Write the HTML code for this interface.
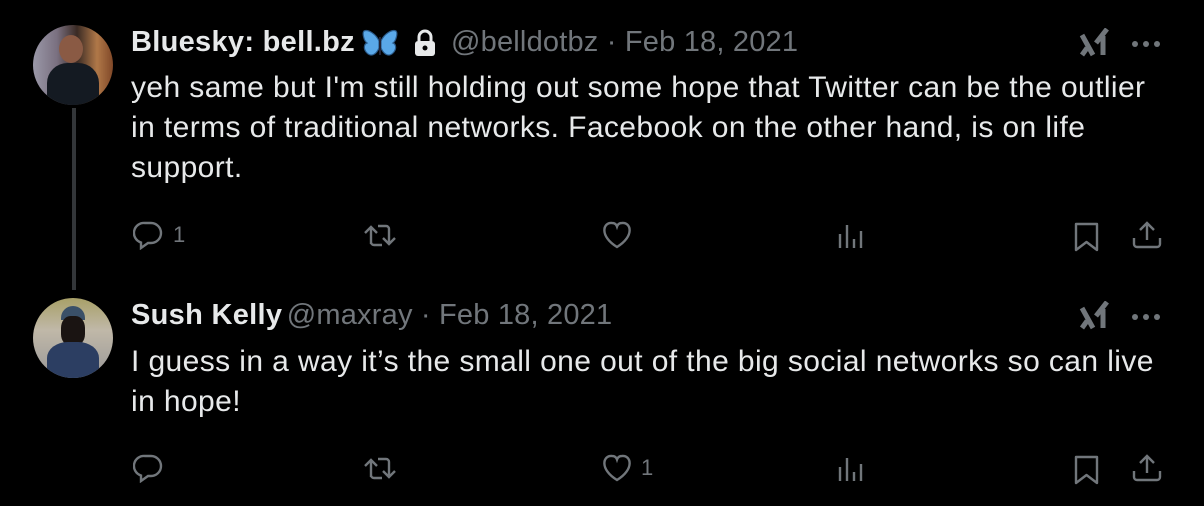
<!DOCTYPE html>
<html><head><meta charset="utf-8"><style>
body{margin:0;background:#000;width:1204px;height:506px;overflow:hidden;font-family:"Liberation Sans",Helvetica,Arial,sans-serif;color:#e7e9ea;position:relative}
.a{position:absolute}
.name{font-weight:bold;font-size:29px;letter-spacing:0.3px}
.gray{color:#71767b;font-size:29px;font-weight:normal;letter-spacing:0.2px}
.txt{font-size:30px;line-height:40px;width:1040px;letter-spacing:0.4px}
.av{border-radius:50%;width:80px;height:80px;overflow:hidden}
svg{position:absolute}
.ic{stroke:#71767b;fill:none;stroke-width:2.4}
.x{stroke:#71767b;stroke-width:5;fill:none}
</style></head><body>
<div class="a" style="left:72px;top:108px;width:4px;height:182px;background:#333639"></div>
<div class="a av" style="left:33px;top:25px;background:linear-gradient(90deg,#9a98a8 0%,#7a7080 30%,#3a2a24 55%,#b07848 80%,#804828 100%)">
 <div class="a" style="left:26px;top:10px;width:24px;height:28px;border-radius:50%;background:#8a5a44"></div>
 <div class="a" style="left:14px;top:38px;width:52px;height:50px;border-radius:40% 40% 0 0;background:#141a22"></div>
</div>
<div class="a av" style="left:33px;top:298px;background:linear-gradient(180deg,#a8a068 0%,#c0b8a8 40%,#9a9898 100%)">
 <div class="a" style="left:28px;top:8px;width:24px;height:14px;border-radius:12px 12px 0 0;background:#3a5068"></div>
 <div class="a" style="left:28px;top:18px;width:24px;height:30px;border-radius:40%;background:#1a1412"></div>
 <div class="a" style="left:14px;top:44px;width:52px;height:40px;border-radius:40% 40% 0 0;background:#2c3e62"></div>
</div>

<div class="a" style="left:131px;top:26px;white-space:nowrap"><span class="name">Bluesky: bell.bz</span><span style="display:inline-block;width:82px"></span><span class="gray" style="margin-left:14px">@belldotbz · Feb 18, 2021</span></div>
<svg style="left:362px;top:29px" width="36" height="30" viewBox="0 0 36 30"><path d="M17 12C14 5 6 0 2 2c-2 2 0 10 3 12-3 1-4 6 0 10s9 2 12-5zM19 12c3-7 11-12 15-10 2 2 0 10-3 12 3 1 4 6 0 10s-9 2-12-5z" fill="#5aa8e8" stroke="#2a5a8a" stroke-width="1.2"/><path d="M18 8v18" stroke="#223" stroke-width="2"/></svg>
<svg style="left:413px;top:29px" width="24" height="28" viewBox="0 0 24 28"><path d="M6 12V8a6 6 0 0 1 12 0v4" stroke="#e7e9ea" stroke-width="3" fill="none"/><rect x="2" y="12" width="20" height="15" rx="3" fill="#e7e9ea"/><circle cx="12" cy="19" r="2.5" fill="#000"/></svg>
<div class="a txt" style="left:131px;top:68px">yeh same but I'm still holding out some hope that Twitter can be the outlier in terms of traditional networks. Facebook on the other hand, is on life support.</div>

<div class="a" style="left:131px;top:299px;white-space:nowrap"><span class="name">Sush Kelly</span> <span class="gray">@maxray · Feb 18, 2021</span></div>
<div class="a txt" style="left:131px;top:342px">I guess in a way it’s the small one out of the big social networks so can live in hope!</div>

<svg style="left:1078px;top:28px" width="32" height="30" viewBox="0 0 32 30"><path class="x" d="M4 7l11 20M4 27l5-7M18 15L29 1M25 8v19"/></svg>
<svg style="left:1078px;top:301px" width="32" height="30" viewBox="0 0 32 30"><path class="x" d="M4 7l11 20M4 27l5-7M18 15L29 1M25 8v19"/></svg>
<svg style="left:1131px;top:38px" width="32" height="12"><circle cx="4" cy="6" r="3" fill="#71767b"/><circle cx="15" cy="6" r="3" fill="#71767b"/><circle cx="26" cy="6" r="3" fill="#71767b"/></svg>
<svg style="left:1131px;top:311px" width="32" height="12"><circle cx="4" cy="6" r="3" fill="#71767b"/><circle cx="15" cy="6" r="3" fill="#71767b"/><circle cx="26" cy="6" r="3" fill="#71767b"/></svg>

<div class="a" style="left:0;top:214px;width:1204px;height:40px">
<svg style="left:133px;top:6px" width="30" height="30" viewBox="0 0 30 30"><path class="ic" d="M12 3h6a10 10 0 0 1 0 20h-3l-7 5v-5.5A10 10 0 0 1 12 3z"/></svg>
<div class="a" style="left:173px;top:8px;font-size:22px;color:#71767b">1</div>
<svg style="left:362px;top:8px" width="36" height="28" viewBox="0 0 36 28"><path class="ic" d="M9 22V5M3 11l6-6 6 6M16 4h8a3 3 0 0 1 3 3v14M21 16l6 6 6-6M20 23h-8a3 3 0 0 1-3-3"/></svg>
<svg style="left:601px;top:6px" width="32" height="30" viewBox="0 0 32 30"><path class="ic" d="M16 27C-2 16 2 2 11 3c3 0 4.5 2 5 3.5C16.5 5 18 3 21 3c9-1 13 13-5 24z"/></svg>
<svg style="left:837px;top:6px" width="30" height="30" viewBox="0 0 30 30"><path class="ic" d="M3 14v14M10 5v23M17 19v9M24 11v17"/></svg>
<svg style="left:1072px;top:6px" width="30" height="32" viewBox="0 0 30 32"><path class="ic" d="M4 4h21v26l-10.5-8L4 30z" stroke-linejoin="round"/></svg>
<svg style="left:1131px;top:6px" width="32" height="30" viewBox="0 0 32 30"><path class="ic" d="M16 20V3M9 10l7-7 7 7M3 18v6a3 3 0 0 0 3 3h20a3 3 0 0 0 3-3v-6"/></svg>
</div>
<div class="a" style="left:0;top:447px;width:1204px;height:40px">
<svg style="left:133px;top:6px" width="30" height="30" viewBox="0 0 30 30"><path class="ic" d="M12 3h6a10 10 0 0 1 0 20h-3l-7 5v-5.5A10 10 0 0 1 12 3z"/></svg>
<svg style="left:362px;top:8px" width="36" height="28" viewBox="0 0 36 28"><path class="ic" d="M9 22V5M3 11l6-6 6 6M16 4h8a3 3 0 0 1 3 3v14M21 16l6 6 6-6M20 23h-8a3 3 0 0 1-3-3"/></svg>
<svg style="left:601px;top:6px" width="32" height="30" viewBox="0 0 32 30"><path class="ic" d="M16 27C-2 16 2 2 11 3c3 0 4.5 2 5 3.5C16.5 5 18 3 21 3c9-1 13 13-5 24z"/></svg>
<div class="a" style="left:641px;top:8px;font-size:22px;color:#71767b">1</div>
<svg style="left:837px;top:6px" width="30" height="30" viewBox="0 0 30 30"><path class="ic" d="M3 14v14M10 5v23M17 19v9M24 11v17"/></svg>
<svg style="left:1072px;top:6px" width="30" height="32" viewBox="0 0 30 32"><path class="ic" d="M4 4h21v26l-10.5-8L4 30z" stroke-linejoin="round"/></svg>
<svg style="left:1131px;top:6px" width="32" height="30" viewBox="0 0 32 30"><path class="ic" d="M16 20V3M9 10l7-7 7 7M3 18v6a3 3 0 0 0 3 3h20a3 3 0 0 0 3-3v-6"/></svg>
</div>
</body></html>
